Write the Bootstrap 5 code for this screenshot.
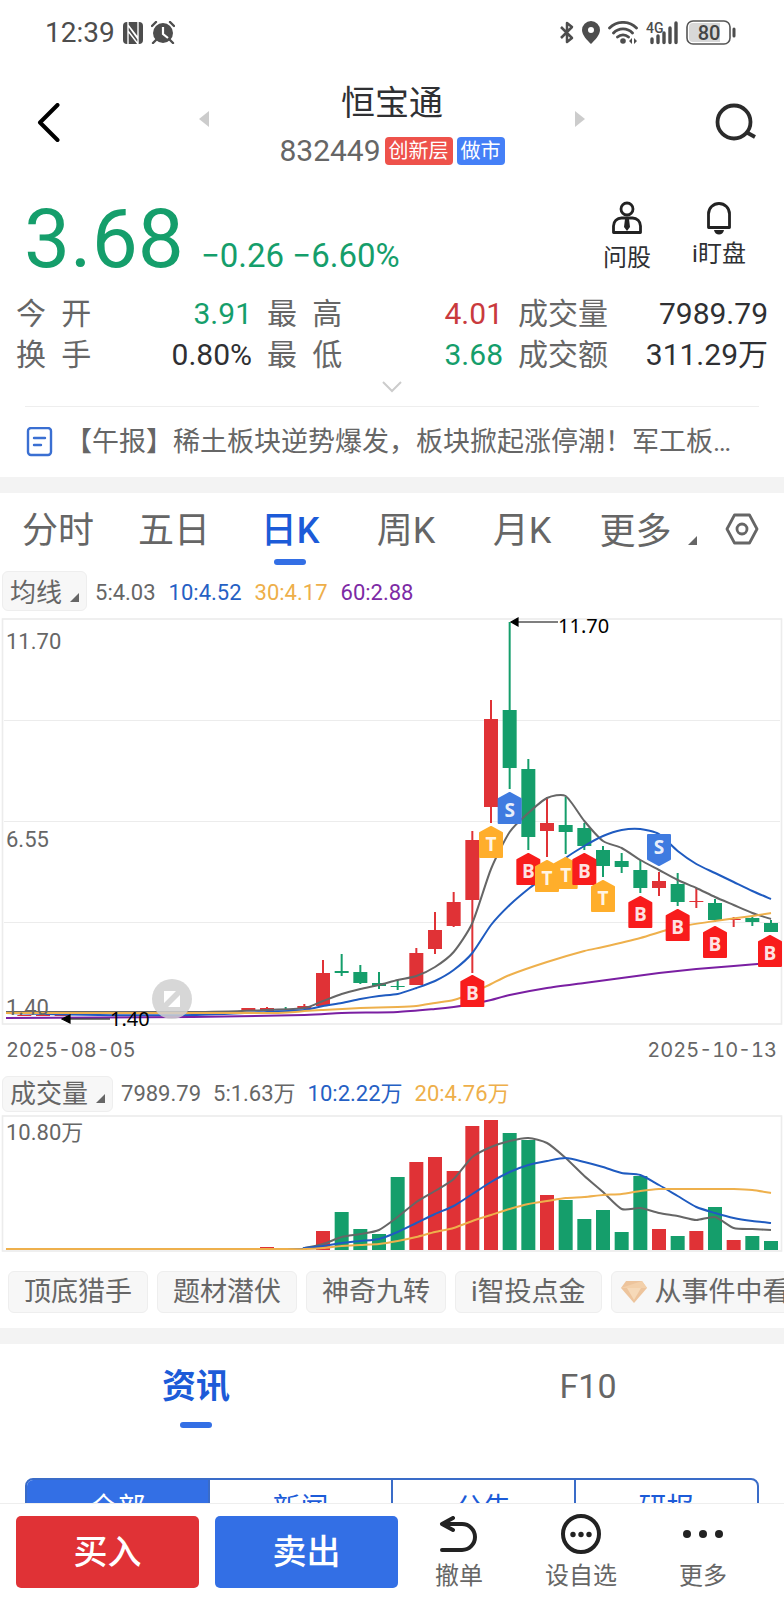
<!DOCTYPE html>
<html lang="zh-CN">
<head>
<meta charset="utf-8">
<meta name="viewport" content="width=device-width, initial-scale=1">
<title>恒宝通 832449</title>
<link href="https://cdn.jsdelivr.net/npm/bootstrap@5.3.0/dist/css/bootstrap.min.css" rel="stylesheet">
<style>
  :root { --ink:#2f3033; --mute:#666; --up:#e03236; --down:#159e6b; --blue:#336fe5; --deep:#1c5bd8; }
  body { font-family: Roboto, "Noto Sans CJK SC", sans-serif; color: var(--ink); background:#fff; overflow-x:hidden; }
  button { background:none; border:0; padding:0; color:inherit; }
  svg { display:block; flex:none; }
  a { color:inherit; text-decoration:none; }
  .t-up { color:#c93a3d; } .t-down { color:var(--down); }
  .statusbar { height:65px; padding:0 48px 0 45px; color:#4d4d4d; font-size:28px; line-height:64px; }
  .topbar { height:115px; padding:0 28px 0 36px; }
  .topbar .pager { width:386px; margin-left:10px; }
  .stock-name { font-size:34px; line-height:44px; font-weight:400; margin:0; }
  .stock-code { font-size:30px; line-height:28px; color:var(--mute); }
  .tagbox { font-size:20px; line-height:28px; padding:0 4px; border-radius:4px; color:#fff; }
  .tag-red { background:#ee524b; } .tag-blue { background:#4580f7; }
  .quote { padding:17px 35px 12px 24px; }
  .price { font-size:82px; line-height:84px; margin-right:17px; }
  .delta { font-size:33px; line-height:40px; }
  .tools { gap:32px; }
  .tool { font-size:24px; line-height:38px; width:60px; }
  .stats { display:grid; grid-template-columns:236fr 236fr 250fr; column-gap:15px; padding:0 16px; font-size:30px; line-height:41px; margin:0; }
  .stats dt { font-weight:400; color:var(--mute); } .stats dd { margin:0; }
  .fold { height:31px; width:100%; }
  .news { margin:0 25px; height:71px; border-top:1px solid #eee; font-size:27px; color:var(--mute); }
  .band { height:16px; background:#f3f3f3; }
  .ktabs { height:78px; font-size:36px; line-height:76px; color:var(--mute); }
  .ktabs > * { flex:116 1 0; text-align:center; position:relative; }
  .ktabs > .more { flex-grow:136; }
  .ktabs > .gear { flex-grow:68; }
  .picked { color:var(--deep); font-weight:500; position:relative; }
  .picked::after { content:""; position:absolute; bottom:6px; left:50%; margin-left:-16px; width:32px; height:6px; border-radius:3px; background:var(--blue); }
  .legend-row { font-size:22px; color:var(--mute); padding-left:2px; }
  .picker { background:#f7f7f7; border:1px solid #eee; border-radius:6px; font-size:26px; padding:0 7px; line-height:34px; }
  .picker-tall { padding-top:4px; }
  .ma-row { height:40px; line-height:36px; } .ma-vals { gap:13px; }
  .vol-row { height:36px; line-height:36px; } .vol-vals { gap:12px; }
  .c10 { color:#2560c4; } .c30 { color:#eeaf4a; } .c60 { color:#7d2aa5; }
  .dates { font-family:Inter, sans-serif; font-size:20px; font-variant-numeric:tabular-nums; line-height:36px; color:var(--mute); padding:0 7px 0 6px; }
  .axis { font-size:22px; fill:var(--mute); } .peak { font:20px "Noto Sans", sans-serif; fill:#000; }
  .pin { font:bold 19px "Open Sans", sans-serif; fill:#fff; fill-opacity:.9; text-anchor:middle; }
  .chips { gap:9px; padding:19px 0 15px 8px; overflow:hidden; }
  .chip { flex:none; background:#f7f7f7; border:1px solid #eee; border-radius:6px; height:42px; padding:0 15px; font-size:27px; line-height:40px; color:var(--mute); white-space:nowrap; }
  .chip-gem { padding-left:9px; }
  .subtabs { font-size:34px; line-height:84px; color:var(--mute); }
  .subtabs .picked { font-weight:700; } .subtabs .picked::after { bottom:0; }
  .segment { margin:50px 25px 0; border:2px solid #3a6cc8; border-radius:8px; overflow:hidden; font-size:28px; line-height:58px; color:var(--deep); }
  .segment > * { flex:1 1 0; } .segment > * + * { border-left:2px solid #3a6cc8; }
  .segment .on { background:var(--blue); color:#fff; }
  .actionbar { background:#fff; border-top:1px solid #eee; padding:12px 20px 8px 16px; }
  .actionbar > * { flex:122 1 0; }
  .trade { flex-grow:183; height:72px; border-radius:5px; color:#fff; font-size:34px; font-weight:500; margin-right:16px; }
  .trade + .trade { margin-right:0; }
  .buy { background:var(--up); } .sell { background:var(--blue); }
  .act { font-size:24px; line-height:32px; color:var(--mute); height:76px; }
</style>
</head>
<body>
<div class="statusbar d-flex align-items-center justify-content-between">
  <div class="d-flex align-items-center">
    <span>12:39</span>
    <svg class="ms-2" width="20" height="22" viewBox="0 0 20 22"><rect width="20" height="22" rx="4" fill="#4d4d4d"/><path d="M5 22V3l10 14v5M5 0v3M15 0v17M5 9l10 13M5 3l10 13" fill="none" stroke="#fff" stroke-width="1.400"/></svg>
    <svg class="ms-2" width="24" height="23" viewBox="0 0 24 23"><circle cx="12" cy="12" r="10" fill="#4d4d4d"/><path d="M1 5l4-4M23 5l-4-4M5 19l-3 3M19 19l3 3" stroke="#4d4d4d" stroke-width="2.400" stroke-linecap="round"/><path d="M12 6v7l5 4" fill="none" stroke="#fff" stroke-width="2.200"/></svg>
  </div>
  <div class="d-flex align-items-center gap-2">
    <svg width="14" height="23" viewBox="0 0 14 23"><path d="M1 6l11 11-5 4V2l5 4L1 17" fill="none" stroke="#4d4d4d" stroke-width="2.500" stroke-linejoin="round"/></svg>
    <svg width="18" height="23" viewBox="0 0 18 23"><path fill="#4d4d4d" fill-rule="evenodd" d="M9 0a9 9 0 0 1 9 9c0 5-5 10-9 14C5 19 0 14 0 9a9 9 0 0 1 9-9zm0 6a3 3 0 1 0 0 6 3 3 0 0 0 0-6z"/></svg>
    <svg width="30" height="23" viewBox="0 0 30 23"><g fill="none" stroke="#4d4d4d" stroke-width="2.800" stroke-linecap="round"><path d="M1.500 7a19 19 0 0 1 27 0M5.500 12a13 13 0 0 1 19 0M9.500 16a8 8 0 0 1 11 0"/></g><circle cx="15" cy="20" r="2.800" fill="#4d4d4d"/><path d="M24 17v6l-3-3zM26 17v6l3-3z" fill="#4d4d4d"/></svg>
    <svg width="32" height="24" viewBox="0 0 32 24"><text x="0" y="12" font-size="14" font-weight="500" fill="#4d4d4d">4G</text><path d="M6 18v3.500M12 15v6.500M18 12v9.500M24 7v14.500M30 2v19.500" stroke="#4d4d4d" stroke-width="3.400" stroke-linecap="round"/></svg>
    <svg width="50" height="25" viewBox="0 0 50 25"><rect x="1" y="1" width="43" height="23" rx="6" fill="#fff" stroke="#555" stroke-width="1.600"/><path d="M7 3h27v19H7a4 4 0 0 1-4-4V7a4 4 0 0 1 4-4z" fill="#d8d8d8"/><path d="M48 9v7" stroke="#4d4d4d" stroke-width="3" stroke-linecap="round"/><text x="23" y="20" font-size="20" font-weight="500" text-anchor="middle" fill="#444">80</text></svg>
  </div>
</div>

<header class="topbar d-flex align-items-center justify-content-between">
  <button aria-label="返回"><svg width="24" height="40" viewBox="0 0 24 40"><path d="M21.500 2L4 19.500 21.500 37" fill="none" stroke="#000" stroke-width="4" stroke-linecap="round" stroke-linejoin="round"/></svg></button>
  <div class="pager d-flex justify-content-between align-items-center">
    <button class="pb-2" aria-label="上一只"><svg width="10" height="16" viewBox="0 0 10 16"><path d="M10 0v16L0 8z" fill="#ccc"/></svg></button>
    <div class="text-center">
      <h1 class="stock-name">恒宝通</h1>
      <div class="d-flex align-items-center gap-1 mt-2 pt-1"><span class="stock-code">832449</span><span class="tagbox tag-red">创新层</span><span class="tagbox tag-blue">做市</span></div>
    </div>
    <button class="pb-2" aria-label="下一只"><svg width="10" height="16" viewBox="0 0 10 16"><path d="M0 0v16l10-8z" fill="#ccc"/></svg></button>
  </div>
  <button aria-label="搜索"><svg width="42" height="40" viewBox="0 0 42 40"><circle cx="20" cy="19" r="16.500" fill="none" stroke="#2b2b2b" stroke-width="3.800"/><path d="M32 29l9 5" stroke="#2b2b2b" stroke-width="3.800"/></svg></button>
</header>

<section class="quote d-flex justify-content-between">
  <div class="d-flex align-items-baseline t-down"><span class="price">3.68</span><span class="delta">−0.26 −6.60%</span></div>
  <div class="tools d-flex">
    <button class="tool d-flex flex-column align-items-center text-nowrap"><svg class="mt-1" width="32" height="34" viewBox="0 0 32 34"><g fill="none" stroke="#222" stroke-width="2.800"><circle cx="16" cy="8" r="6"/><path d="M2.500 31.500V25a8 8 0 0 1 8-8h11a8 8 0 0 1 8 8v6.500z" stroke-linejoin="round"/></g><path d="M14 18h4l1 8-3 4-3-4z" fill="#222"/></svg><span class="mt-1">问股</span></button>
    <button class="tool d-flex flex-column align-items-center text-nowrap"><svg class="mt-1" width="28" height="34" viewBox="0 0 28 34"><path d="M3.500 26.500V13a10.500 10.500 0 0 1 21 0v13.500z" fill="none" stroke="#222" stroke-width="2.800" stroke-linejoin="round"/><path d="M9 29h10c-1 6-9 6-10 0z" fill="#222"/></svg><span>i盯盘</span></button>
  </div>
</section>

<dl class="stats">
  <div class="d-flex justify-content-between"><dt>今&ensp;开</dt><dd class="t-down">3.91</dd></div>
  <div class="d-flex justify-content-between"><dt>最&ensp;高</dt><dd class="t-up">4.01</dd></div>
  <div class="d-flex justify-content-between"><dt>成交量</dt><dd>7989.79</dd></div>
  <div class="d-flex justify-content-between"><dt>换&ensp;手</dt><dd>0.80%</dd></div>
  <div class="d-flex justify-content-between"><dt>最&ensp;低</dt><dd class="t-down">3.68</dd></div>
  <div class="d-flex justify-content-between"><dt>成交额</dt><dd>311.29万</dd></div>
</dl>
<button class="fold d-flex justify-content-center align-items-start pt-1" aria-label="展开"><svg width="20" height="16" viewBox="0 0 20 16"><path d="M1 3l9 9 9-9" fill="none" stroke="#ccc" stroke-width="2"/></svg></button>
<a href="#" class="news d-flex align-items-center">
  <svg width="28" height="30" viewBox="0 0 28 30"><rect x="3" y="1" width="23" height="27" rx="3" fill="none" stroke="#3a6fd2" stroke-width="2.400"/><path d="M9 11h11M9 18h7" stroke="#3a6fd2" stroke-width="2.400" stroke-linecap="round"/></svg>
  <span class="text-truncate ms-2 ps-1">【午报】稀土板块逆势爆发，板块掀起涨停潮！军工板…</span>
</a>
<div class="band"></div>

<nav class="ktabs d-flex">
  <a href="#">分时</a><a href="#">五日</a><a href="#" class="picked">日K</a><a href="#">周K</a><a href="#">月K</a>
  <a href="#" class="more d-flex justify-content-center align-items-center">更多<svg class="ms-3 mt-3" width="9" height="9" viewBox="0 0 9 9"><path d="M9 0v9H0z" fill="#666"/></svg></a>
  <button class="gear d-flex justify-content-center pt-3" aria-label="设置"><svg class="mt-1 me-3" width="34" height="32" viewBox="0 0 34 32"><path d="M9.500 2h15L32 16l-7.500 14h-15L2 16z" fill="none" stroke="#666" stroke-width="2.800" stroke-linejoin="round"/><circle cx="17" cy="16" r="5" fill="none" stroke="#666" stroke-width="2.800"/></svg></button>
</nav>

<div class="legend-row ma-row d-flex align-items-end">
  <button class="picker picker-tall d-flex align-items-end"><span>均线</span><svg class="ms-2 mb-2" width="9" height="9" viewBox="0 0 9 9"><path d="M9 0v9H0z" fill="#666"/></svg></button>
  <div class="ma-vals d-flex ms-2"><span>5:4.03</span><span class="c10">10:4.52</span><span class="c30">30:4.17</span><span class="c60">60:2.88</span></div>
</div>
<svg id="kline" width="100%" viewBox="0 611 784 421" role="img" aria-label="日K线">
  <g fill="none" stroke="#ececec"><path d="M4 720.500h776M4 821.500h776M4 922.500h776" stroke-width="1.200"/><rect x="2.500" y="619" width="779" height="405" stroke-width="1.600"/></g>
  <g id="candles"></g>
  <g id="averages" fill="none" stroke-width="2"></g>
  <text class="axis" x="6" y="649">11.70</text><text class="axis" x="6" y="847">6.55</text><text class="axis" x="6" y="1015">1.40</text>
  <path d="M511 622l7-4v8zM518 622h40" stroke="#000" stroke-width="1.200"/><text class="peak" x="558" y="633">11.70</text>
  <path d="M62 1019l8-4v8zM70 1019h40" stroke="#000" stroke-width="1.200"/><text class="peak" x="110" y="1026">1.40</text>
  <g id="pins"></g>
  <circle cx="172" cy="999" r="20" fill="#d0d0d0" fill-opacity=".85"/><path d="M164 991h12l-12 12zM180 995v12h-12z" fill="#fff"/>
</svg>
<div class="dates d-flex justify-content-between"><span>2025-08-05</span><span>2025-10-13</span></div>

<div class="pt-2 legend-row"><div class="vol-row d-flex align-items-center">
  <button class="picker d-flex align-items-end"><span>成交量</span><svg class="ms-2 mb-2" width="9" height="9" viewBox="0 0 9 9"><path d="M9 0v9H0z" fill="#666"/></svg></button>
  <div class="vol-vals d-flex ms-2"><span>7989.79</span><span>5:1.63万</span><span class="c10">10:2.22万</span><span class="c30">20:4.76万</span></div>
</div></div>
<svg id="volume" width="100%" viewBox="0 1112 784 140" role="img" aria-label="成交量">
  <rect x="2.500" y="1116" width="779" height="135" fill="none" stroke="#ececec" stroke-width="1.600"/>
  <g id="bars"></g>
  <g id="volavg" fill="none" stroke-width="2"></g>
  <text class="axis" x="6" y="1140">10.80万</text>
</svg>

<div class="chips d-flex">
  <button class="chip">顶底猎手</button><button class="chip">题材潜伏</button><button class="chip">神奇九转</button><button class="chip">i智投点金</button>
  <button class="chip chip-gem d-flex align-items-center"><svg class="me-2" width="26" height="22" viewBox="0 0 26 22"><path d="M5 0h16l5 7-13 15L0 7z" fill="#edc49c"/><path d="M0 7h26l-5-7z" fill="#f3d0aa"/><path d="M6 7h14l-7 12z" fill="#f6d9b8"/></svg><span>从事件中看机会</span></button>
</div>
<div class="band"></div>

<nav class="subtabs d-flex text-center"><a href="#" class="picked w-50">资讯</a><a href="#" class="w-50">F10</a></nav>
<div class="segment d-flex"><button class="on">全部</button><button>新闻</button><button>公告</button><button>研报</button></div>

<footer class="actionbar fixed-bottom d-flex">
  <button class="trade buy">买入</button><button class="trade sell">卖出</button>
  <button class="act d-flex flex-column align-items-center justify-content-between"><svg width="40" height="38" viewBox="0 0 40 38"><path d="M14 2L3 8l11 6M3 8h20a13 13 0 0 1 0 26H3" fill="none" stroke="#222" stroke-width="4" stroke-linecap="round" stroke-linejoin="round"/></svg><span>撤单</span></button>
  <button class="act d-flex flex-column align-items-center justify-content-between"><svg width="40" height="40" viewBox="0 0 40 40" overflow="visible"><g transform="translate(0 -2)"><circle cx="20" cy="20" r="18" fill="none" stroke="#222" stroke-width="4"/><g fill="#222"><circle cx="12" cy="20.500" r="2.700"/><circle cx="20" cy="20.500" r="2.700"/><circle cx="28" cy="20.500" r="2.700"/></g></g></svg><span>设自选</span></button>
  <button class="act d-flex flex-column align-items-center justify-content-between"><svg width="40" height="36" viewBox="0 0 40 36"><g fill="#222"><circle cx="4" cy="18" r="4"/><circle cx="20" cy="18" r="4"/><circle cx="36" cy="18" r="4"/></g></svg><span>更多</span></button>
</footer>

<script src="https://cdn.jsdelivr.net/npm/bootstrap@5.3.0/dist/js/bootstrap.bundle.min.js"></script>
<script>
// Days are counted backwards from the latest session (0).
const UP = '#e03236', DOWN = '#159e6b';
const dayX = k => 771 - k * 56 / 3;
// [day, direction, high, body top, body bottom, low, volume top]
const days = [
 [0,'d',920,923,932,932,1241],[1,'d',917,918,922,926,1236],[2,'u',917,919,920,927,1240],[3,'d',899,903,920,922,1207],
 [4,'u',888,901,902,908,1231],[5,'d',873,884,902,906,1236],[6,'u',872,881,888,896,1229],[7,'d',860,870,888,893,1176],
 [8,'d',853,861,867,873,1232],[9,'d',846,850,866,877,1210],[10,'d',823,828,846,850,1219],[11,'d',797,825,832,854,1200],
 [12,'u',797,823,831,857,1195],[13,'d',759,769,837,850,1140],[14,'d',622,710,768,789,1133],[15,'u',700,719,807,823,1120],
 [16,'u',831,840,900,973,1126],[17,'u',892,902,926,927,1171],[18,'u',912,930,949,954,1157],[19,'u',948,953,985,985,1162],
 [20,'d',980,986,987,990,1177],[21,'d',972,983,986,989,1234],[22,'d',965,972,983,984,1229],[23,'d',954,971,973,976,1212],
 [24,'u',960,973,1006,1006,1231],[25,'u',1004,1006,1009,1009,1250],[26,'d',1007,1009,1010,1010,1250],[27,'u',1007,1008,1011,1011,1247],
 [28,'u',1008,1008,1011,1011,1250],[31,'u',1011,1011,1012,1012,1250],[32,'u',1011,1011,1012,1012,1250],
 [38,'u',1015,1015,1016,1016,1250],[39,'u',1015,1015,1016,1016,1250],[40,'u',1015,1015,1016,1016,1250]];
let c = '', b = '';
for (const [k, dir, hi, t, bt, lo, v] of days) {
  const x = dayX(k), f = dir === 'u' ? UP : DOWN;
  c += `<path d="M${x} ${hi}V${lo}" stroke="${f}" stroke-width="2"/><rect x="${x-7}" y="${t}" width="14" height="${bt-t}" fill="${f}"/>`;
  b += `<rect x="${x-7}" y="${v}" width="14" height="${1250-v}" fill="${f}"/>`;
}
candles.innerHTML = c; bars.innerHTML = b;
function curve(vals, color) {
  const p = vals.map((y, k) => [dayX(k), y]); p.push([6, vals[vals.length - 1]]);
  return smooth(p, color);
}
function smooth(p, color) {
  let d = `M${p[0]}`;
  for (let i = 0; i < p.length - 1; i++) {
    const a = p[i-1] || p[i], q = p[i], r = p[i+1], s = p[i+2] || r, n = 9;
    d += `C${q[0]+(r[0]-a[0])/n} ${q[1]+(r[1]-a[1])/n} ${r[0]-(s[0]-q[0])/n} ${r[1]-(s[1]-q[1])/n} ${r[0]} ${r[1]}`;
  }
  return `<path d="${d}" stroke="${color}"/>`;
}
const sparse = list => list.map(([k, y]) => [k === 41 ? 6 : dayX(k), y]);
averages.innerHTML =
 smooth(sparse([[0,919],[1,913],[2,905],[3,897],[4,888],[5,880],[6,870],[7,860],[8,848],[9,841],[10,821],[11,796],[12,798],[13,813],[14,832],[15,869],[16,923],[17,952],[18,967],[19,976],[20,980],[21,985],[22,989],[23,994],[24,1001],[25,1008],[27,1010],[31,1012],[41,1012]]), '#666') +
 smooth(sparse([[0,899],[1,891],[2,882],[3,873],[4,864],[5,851],[6,834],[7,829],[8,830],[9,836],[10,846],[11,858],[12,875],[13,889],[14,905],[15,925],[16,953],[17,970],[18,981],[19,988],[20,994],[21,996],[22,999],[23,1003],[24,1006],[25,1010],[27,1012],[31,1015],[36,1015],[41,1013]]), '#1f5bc0') +
 smooth(sparse([[0,913],[1,916],[3,921],[5,927],[7,938],[9,947],[10,951],[12,962],[14,975],[15,984],[16,993],[17,1000],[18,1003],[19,1006],[20,1007],[22,1008],[24,1010],[25,1011],[27,1013],[41,1013]]), '#eeb04c') +
 smooth(sparse([[0,963],[2,966],[4,969],[6,973],[8,978],[10,983],[12,988],[14,995],[15,1000],[16,1004],[17,1007],[18,1009],[20,1012],[23,1013],[25,1015],[31,1017],[41,1018]]), '#7a1fa2');
volavg.innerHTML =
 curve([1230,1229,1228,1217,1220,1216,1213,1208,1209,1192,1176,1158,1143,1138,1141,1147,1157,1179,1191,1202,1217,1230,1234,1237,1244,1248,1249], '#666') +
 curve([1223,1221,1218,1213,1207,1196,1185,1175,1173,1167,1162,1158,1161,1165,1172,1182,1194,1206,1214,1223,1232,1239,1241,1243,1246,1248,1249], '#1f5bc0') +
 curve([1193,1190,1189,1189,1189,1189,1189,1191,1194,1195,1197,1198,1201,1204,1209,1215,1221,1228,1232,1237,1241,1244,1245,1246,1248,1249,1249], '#eeb04c');
const pinFill = {B:'#f81c1c', T:'#ffae2b', S:'#3f7be0'};
pins.innerHTML = [[16,975,'B'],[15,826,'T'],[14,792,'S'],[13,853,'B'],[12,860,'T'],[11,857,'T'],[10,853,'B'],[9,880,'T'],[7,896,'B'],[6,834,'S',1],[5,909,'B'],[3,926,'B'],[0,935,'B']]
 .map(([k, y, s, flip]) => {
   const x = k ? dayX(k) : 770, up = `M${x} ${y+1}l11 6v24h-22v-24z`, dn = `M${x} ${y+31}l11-6v-24h-22v24z`;
   return `<path d="${flip ? dn : up}" fill="${pinFill[s]}" stroke="${pinFill[s]}" stroke-width="2" stroke-linejoin="round"/><text class="pin" x="${x}" y="${y + (flip ? 20 : 25)}">${s}</text>`;
 }).join('');
</script>
</body>
</html>
